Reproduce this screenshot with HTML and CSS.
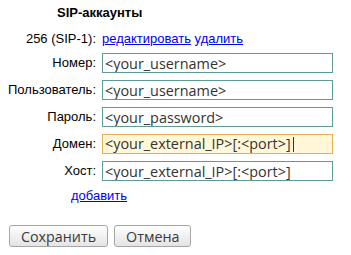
FILE: index.html
```html
<!DOCTYPE html>
<html lang="ru">
<head>
    <meta charset="UTF-8">
    <title>SIP-аккаунты</title>
    <link rel="stylesheet" href="styles.css">
</head>
<body>

    <!-- SIP accounts -->
    <h3 class="title">SIP-аккаунты</h3>

    <div class="accounts">
        <div class="label">256 (SIP-1):</div>
        <div class="links">
            <a href="#">редактировать</a>
            <a href="#">удалить</a>
        </div>

        <label class="label" for="number">Номер:</label>
        <input class="field" id="number" type="text" value="<your_username>">

        <label class="label" for="user">Пользователь:</label>
        <input class="field" id="user" type="text" value="<your_username>">

        <label class="label" for="pass">Пароль:</label>
        <input class="field" id="pass" type="text" value="<your_password>">

        <label class="label" for="domain">Домен:</label>
        <div class="field focused" id="domain">&lt;your_external_IP&gt;[:&lt;port&gt;]<span class="caret"></span></div>

        <label class="label" for="host">Хост:</label>
        <input class="field" id="host" type="text" value="<your_external_IP>[:<port>]">
    </div>

    <div class="add">
        <a href="#">добавить</a>
    </div>

    <!-- Buttons -->
    <div class="buttons">
        <button type="button">Сохранить</button>
        <button type="button">Отмена</button>
    </div>

</body>
</html>
```

FILE: styles.css
```css
body {
    margin: 0;
    padding: 0;
    font-family: "Liberation Sans", Arial, sans-serif;
    font-size: 13px;
    color: #000;
    background: #fff;
}

a {
    color: #0000ee;
    text-decoration: underline;
}

.title {
    margin: 0;
    padding: 5px 0 0 57px;
    font-size: 13px;
    line-height: 16px;
    font-weight: bold;
}

/* Form grid */
.accounts {
    display: grid;
    grid-template-columns: 96px 231px;
    column-gap: 6px;
    row-gap: 7px;
    align-items: center;
    margin-top: 11px;
}

.accounts .label {
    text-align: right;
    line-height: 14px;
}

.links {
    line-height: 14px;
}

.field {
    box-sizing: border-box;
    width: 231px;
    height: 20px;
    margin: 0;
    padding: 0 2px;
    border: 1px solid #5e9b97;
    border-radius: 0;
    background: #fff;
    font-family: "Open Sans", "DejaVu Sans", sans-serif;
    font-size: 14.4px;
    line-height: 18px;
    color: #333;
    outline: none;
}

.field.focused {
    background: #fff7d7;
    border-color: #e8b04c;
    white-space: nowrap;
}

.caret {
    display: inline-block;
    width: 1px;
    height: 15px;
    margin-left: 2px;
    vertical-align: -3px;
    background: #333;
}

.add {
    padding-left: 71px;
    margin-top: 7px;
    line-height: 15px;
}

/* Buttons */
.buttons {
    display: flex;
    gap: 6px;
    padding-left: 9px;
    margin-top: 22px;
}

button {
    box-sizing: border-box;
    height: 22px;
    padding: 0 11px;
    border: 1px solid #a6a6a6;
    border-radius: 3px;
    background: linear-gradient(#fefefe, #e4e4e4);
    font-family: "Open Sans", "DejaVu Sans", sans-serif;
    font-size: 14.3px;
    color: #3a3a3a;
    cursor: pointer;
}
```
